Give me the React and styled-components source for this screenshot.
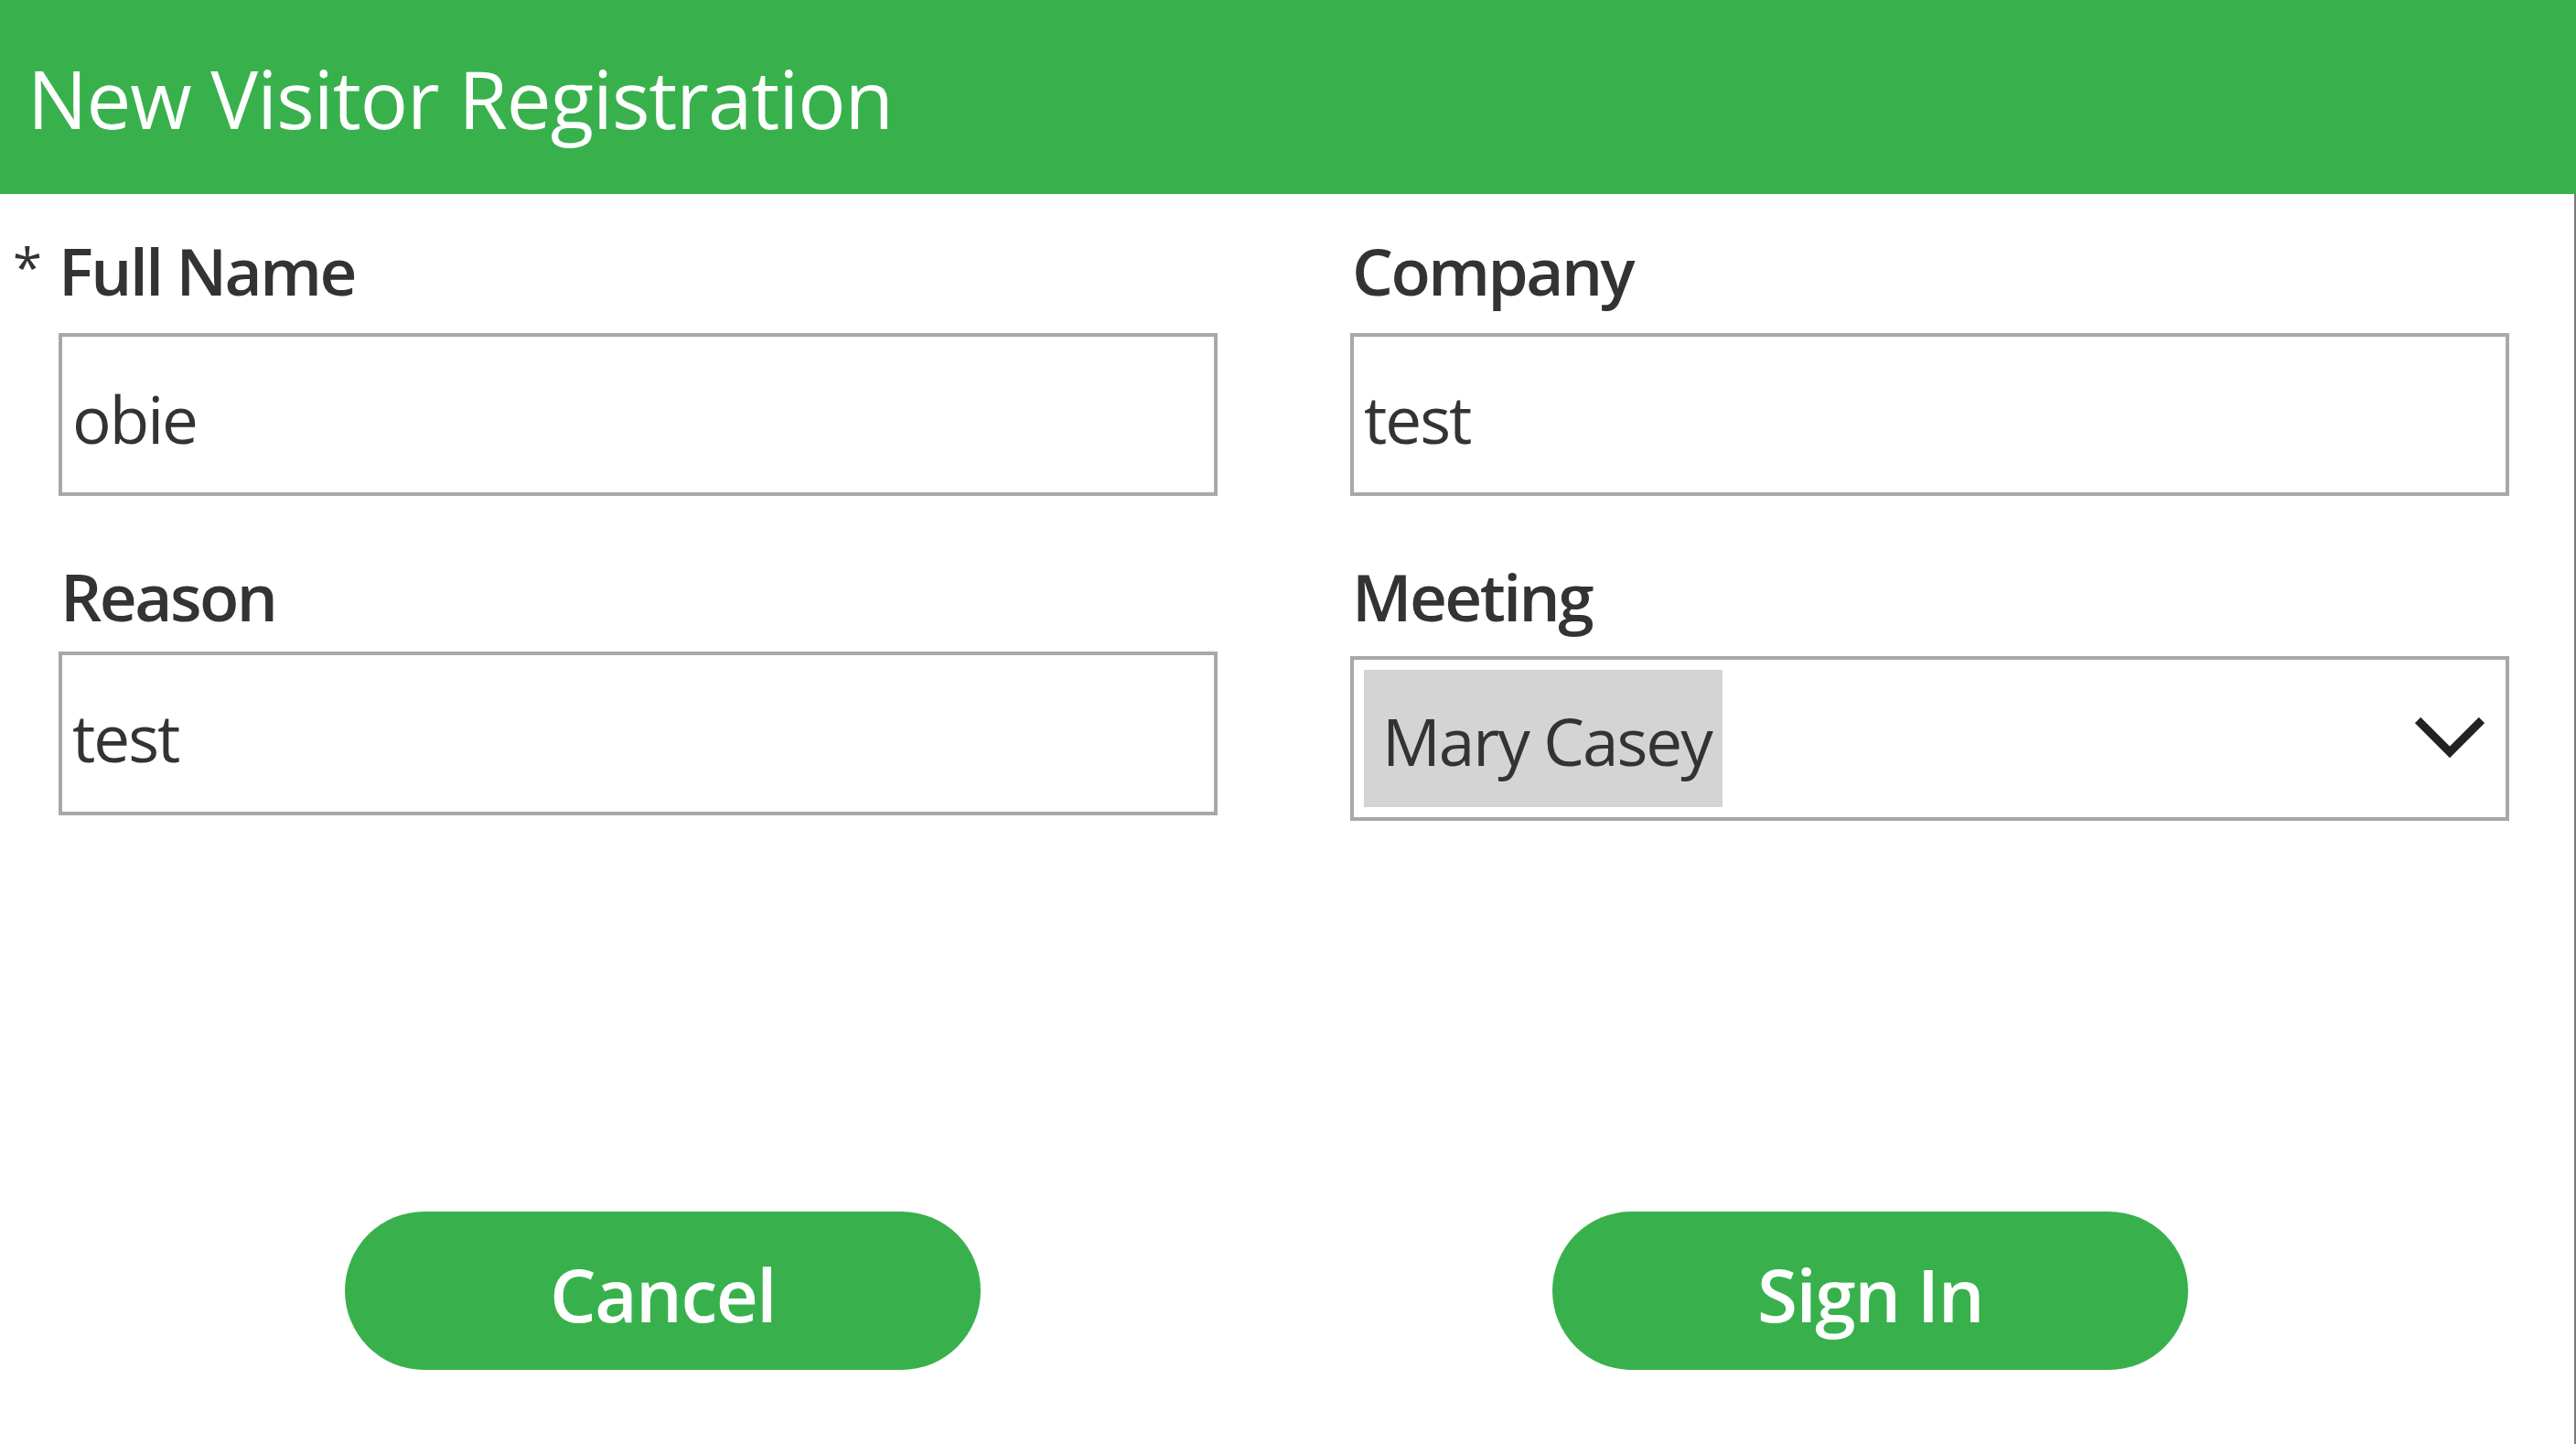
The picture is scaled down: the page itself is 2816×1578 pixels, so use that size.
import React from 'react';
import styled, { createGlobalStyle } from 'styled-components';

const GlobalStyle = createGlobalStyle`
  html, body {
    margin: 0;
    padding: 0;
    background: #ffffff;
  }
  body {
    font-family: 'Open Sans', 'Noto Sans', sans-serif;
    color: #333333;
  }
  * {
    box-sizing: border-box;
  }
`;

const GREEN = '#38b14d';

function Chevron() {
  return (
    <svg width="76" height="46" viewBox="0 0 76 46">
      <polyline
        points="3,3 38,38 73,3"
        fill="none"
        stroke="#222222"
        strokeWidth="9"
        strokeLinejoin="miter"
      />
    </svg>
  );
}

export default function App() {
  return (
    <Page>
      <GlobalStyle />
      <Header>
        <Title>New Visitor Registration</Title>
      </Header>
      <Main>
        <FormGrid>
          <Field>
            <Label $space={32}>
              <Required>*</Required>Full Name
            </Label>
            <TextBox readOnly value="obie" />
          </Field>
          <Field>
            <Label $space={32}>Company</Label>
            <TextBox readOnly value="test" />
          </Field>
          <Field>
            <Label $space={24}>Reason</Label>
            <TextBox readOnly value="test" $height={179} />
          </Field>
          <Field>
            <Label $space={29}>Meeting</Label>
            <SelectBox>
              <Selected>Mary Casey</Selected>
              <Chevron />
            </SelectBox>
          </Field>
        </FormGrid>
        <ButtonRow>
          <PillButton>Cancel</PillButton>
          <PillButton>Sign In</PillButton>
        </ButtonRow>
      </Main>
    </Page>
  );
}

const Page = styled('div')`
  width: 100%;
  min-height: 100vh;
  display: flex;
  flex-direction: column;
`;

const Header = styled('header')`
  height: 212px;
  background-color: ${GREEN};
  padding: 64px 0 0 30px;
`;

const Title = styled('h1')`
  margin: 0;
  font-family: 'Open Sans', sans-serif;
  font-weight: 400;
  font-size: 87px;
  line-height: 87px;
  color: #ffffff;
  letter-spacing: -1px;
`;

const Main = styled('main')`
  flex: 1;
  display: flex;
  flex-direction: column;
  border-right: 2px solid #7a7a7a;
`;

const FormGrid = styled('div')`
  display: grid;
  grid-template-columns: 1267px 1267px;
  column-gap: 145px;
  row-gap: 73px;
  align-items: start;
  padding: 47px 0 0 64px;
`;

const Field = styled('div')`
  display: flex;
  flex-direction: column;
`;

const Label = styled('label')`
  display: block;
  height: 73px;
  font-weight: 600;
  font-size: 71px;
  line-height: 73px;
  color: #333333;
  padding-left: 2px;
  letter-spacing: -2.5px;
  white-space: nowrap;
  margin-bottom: ${props => props.$space || 32}px;
`;

const Required = styled('span')`
  display: inline-block;
  width: 58px;
  margin-left: -60px;
  padding-left: 8px;
  font-weight: 400;
  font-size: 58px;
  line-height: 0;
  vertical-align: 9px;
  letter-spacing: 0;
`;

const TextBox = styled('input')`
  width: 100%;
  height: ${props => props.$height || 178}px;
  border: 4px solid #a8a8a8;
  outline: none;
  background: #ffffff;
  padding: 8px 0 0 11px;
  font-family: 'Open Sans', sans-serif;
  font-size: 71px;
  color: #333333;
  letter-spacing: -2px;
`;

const SelectBox = styled('div')`
  height: 180px;
  border: 4px solid #a8a8a8;
  padding: 11px 23px 11px 11px;
  display: flex;
  align-items: stretch;
  justify-content: space-between;

  svg {
    align-self: center;
  }
`;

const Selected = styled('div')`
  background-color: #d4d4d4;
  display: flex;
  align-items: center;
  padding: 4px 12px 0 20px;
  font-size: 71px;
  color: #333333;
  letter-spacing: -2px;
`;

const ButtonRow = styled('div')`
  display: flex;
  gap: 625px;
  padding-left: 377px;
  margin-top: 427px;
`;

const PillButton = styled('button')`
  width: 695px;
  height: 173px;
  border: none;
  border-radius: 87px;
  background-color: ${GREEN};
  color: #ffffff;
  font-family: 'Open Sans', sans-serif;
  font-weight: 600;
  font-size: 80px;
  letter-spacing: -1.5px;
  padding-top: 6px;
  cursor: pointer;
`;
